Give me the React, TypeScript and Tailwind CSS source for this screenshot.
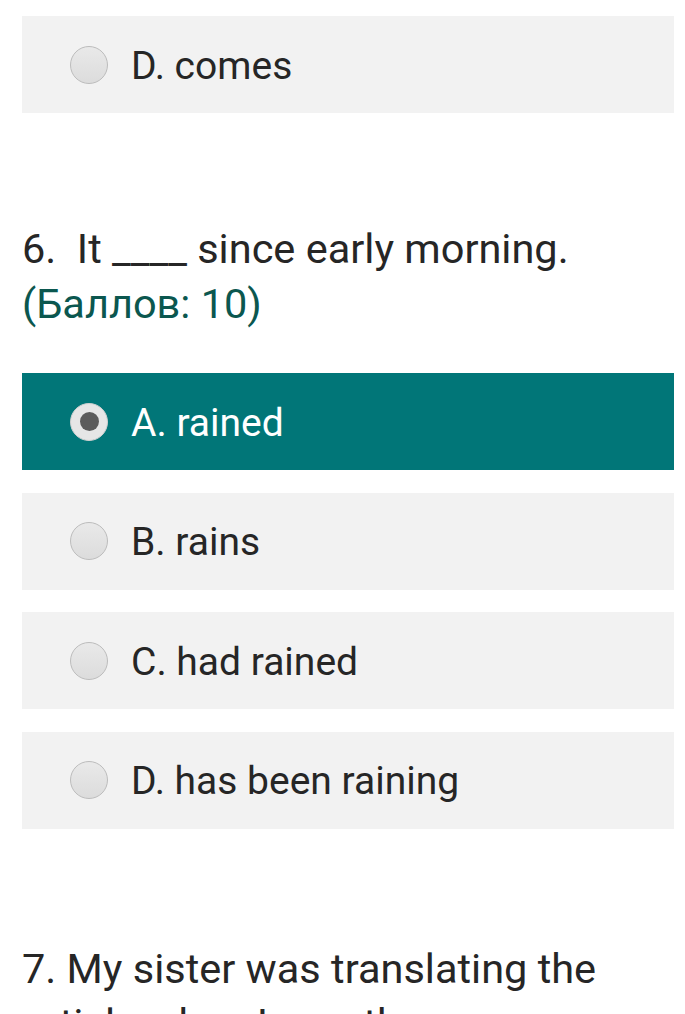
/* Quiz page fragment: multiple-choice options */

const OPTIONS = ["A. rained", "B. rains", "C. had rained", "D. has been raining"];

function Radio({ checked }: { checked?: boolean }) {
  return (
    <span
      className={`w-[38px] h-[38px] rounded-full flex items-center justify-center shrink-0 border ${
        checked
          ? "bg-[#e6e6e6] border-[#d0d0d0]"
          : "bg-gradient-to-b from-[#e9e9e9] to-[#dcdcdc] border-[#bcbcbc]"
      }`}
    >
      {checked && <span className="w-[19px] h-[19px] rounded-full bg-[#5b5b5b]" />}
    </span>
  );
}

function Option({ label, checked }: { label: string; checked?: boolean }) {
  return (
    <div
      className={`h-[97px] flex items-center pl-[48px] gap-[23px] ${
        checked ? "bg-[#017678] text-white" : "bg-[#f2f2f2] text-[#262626]"
      }`}
    >
      <Radio checked={checked} />
      <span className="text-[39px] leading-none pt-[3px]">{label}</span>
    </div>
  );
}

export default function App() {
  return (
    <div
      className="bg-white pl-[22px] pr-[11px] pt-[16px] overflow-hidden h-[1014px]"
      style={{ fontFamily: "Roboto, 'Liberation Sans', sans-serif" }}
    >
      <Option label="D. comes" />

      <div className="mt-[108px] text-[41.5px] leading-[55px] text-[#262626]">
        <p>6.&nbsp; It ____ since early morning.</p>
        <p className="text-[#0b574f]">(Баллов: 10)</p>
      </div>

      <div className="mt-[42px] flex flex-col gap-[22.5px]">
        {OPTIONS.map((opt, i) => (
          <Option key={opt} label={opt} checked={i === 0} />
        ))}
      </div>

      <div className="mt-[112px] text-[41.5px] leading-[55px] text-[#262626]">
        <p>7. My sister was translating the</p>
        <p>article when I ____ the room.</p>
      </div>
    </div>
  );
}
